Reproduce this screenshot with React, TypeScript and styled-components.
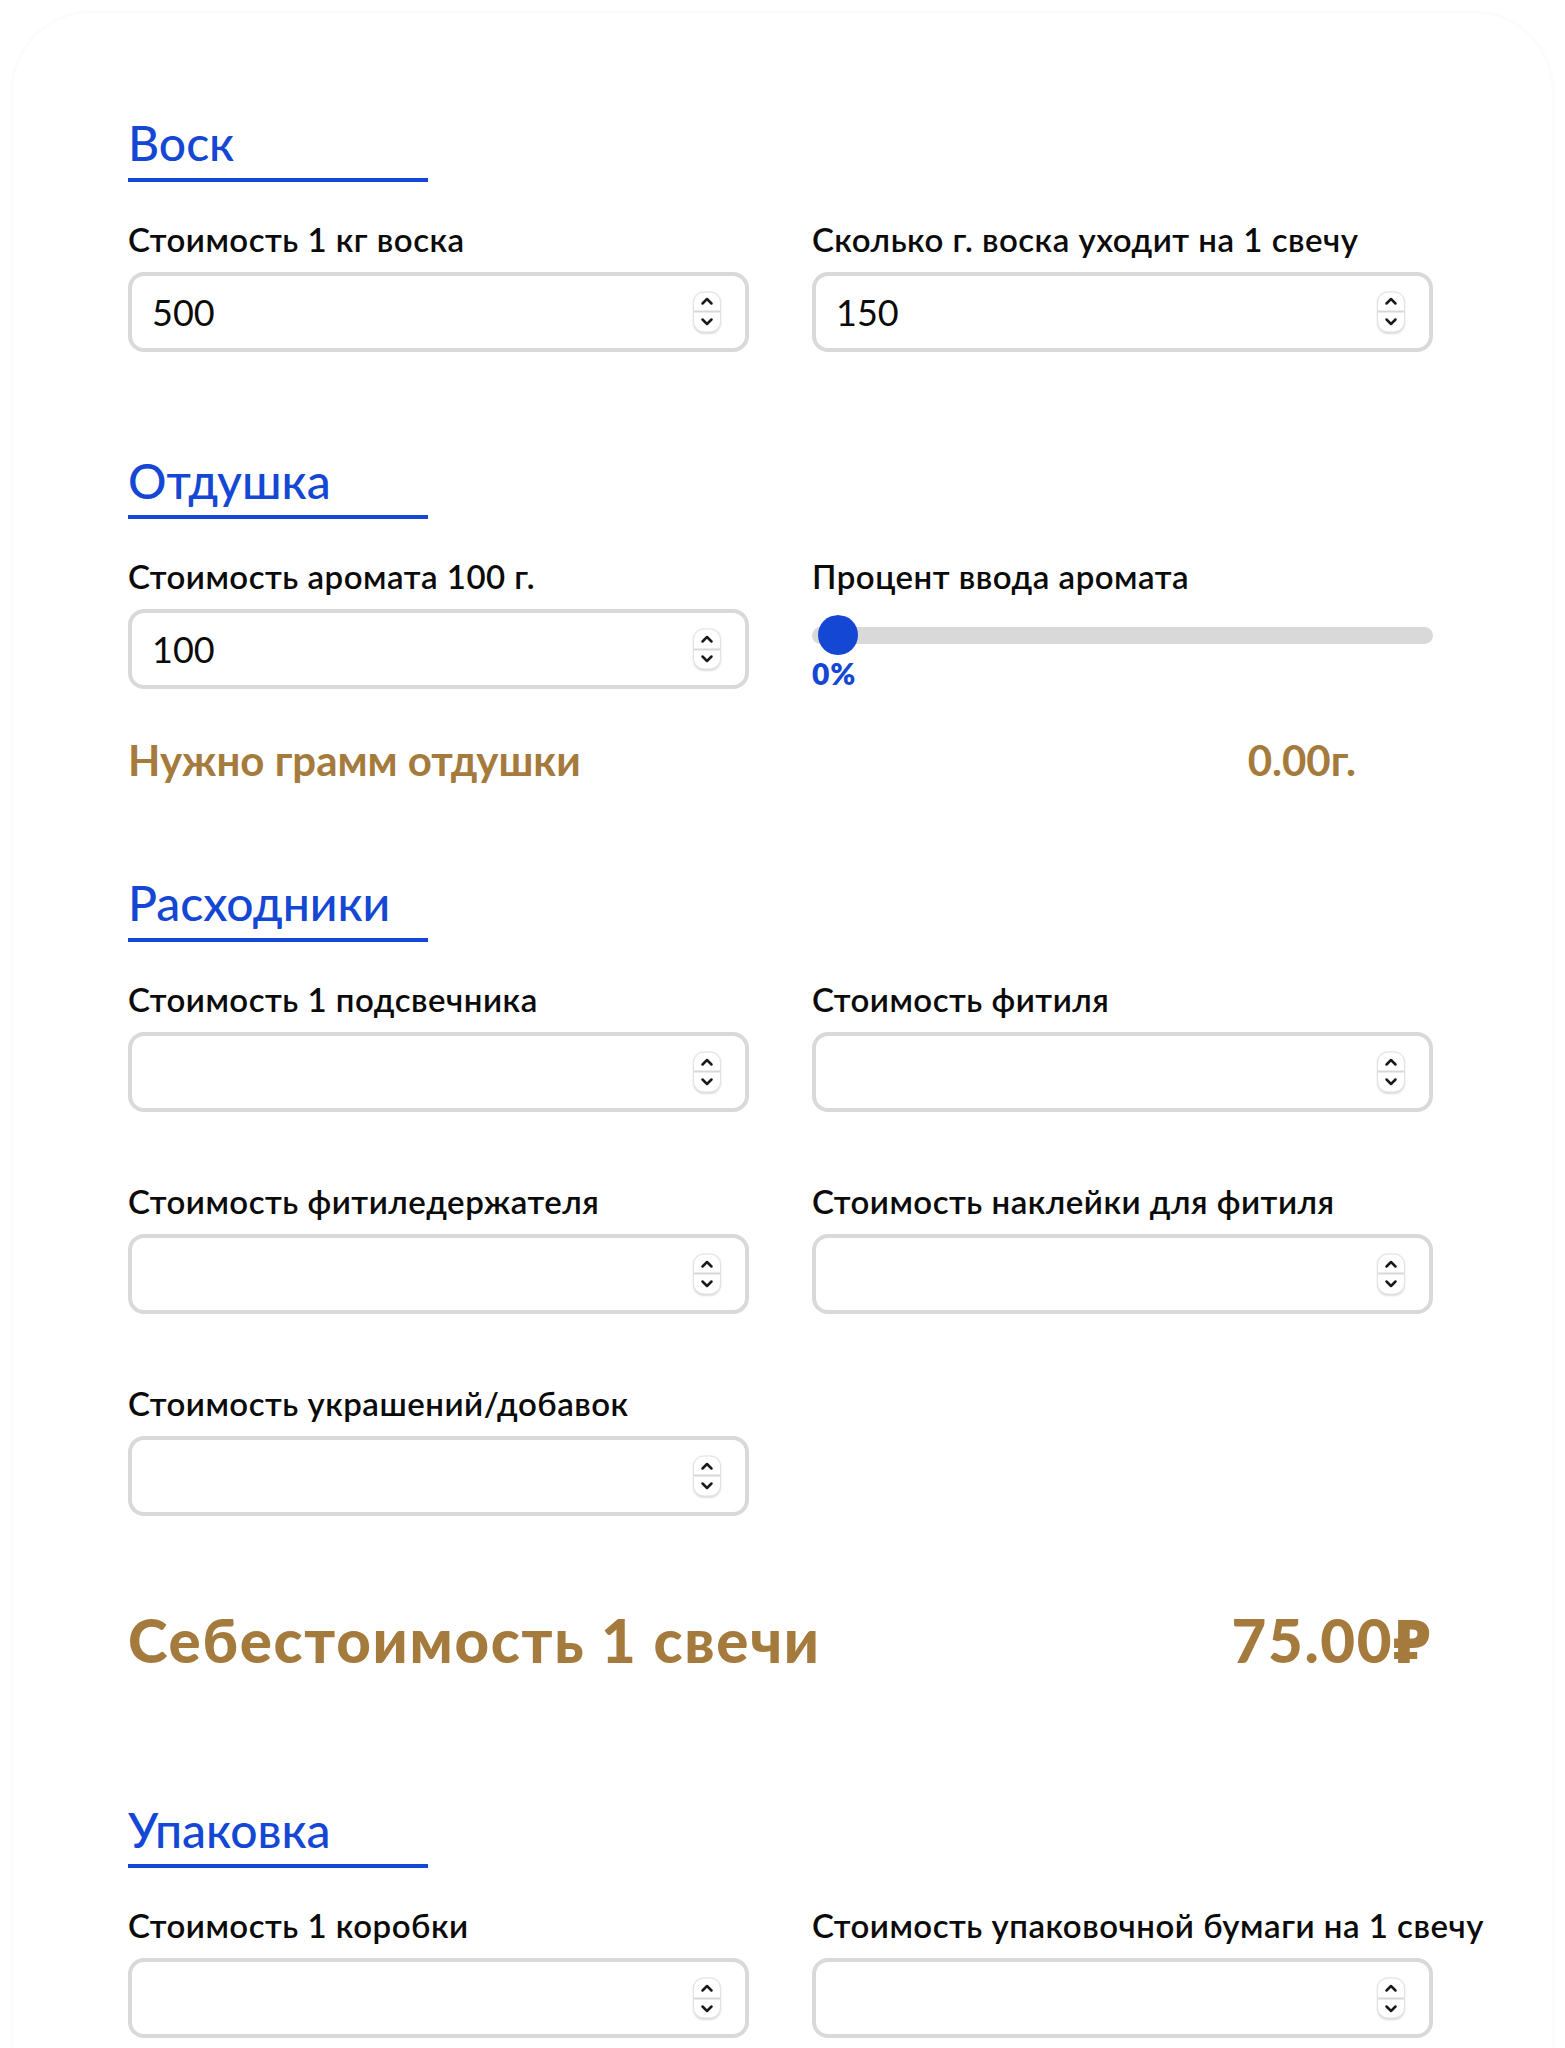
import React, { useState } from 'react'
import styled, { createGlobalStyle } from 'styled-components'

const colors = {
  blue: '#1447d4',
  gold: '#a57a3d',
  text: '#0b0b0b',
  border: '#d9d9d9',
  track: '#d9d9d9',
}

const GlobalStyle = createGlobalStyle`
  html, body {
    margin: 0;
    padding: 0;
    background: #ffffff;
  }
  body {
    font-family: Lato, "Noto Sans", sans-serif;
    color: ${colors.text};
  }
  * {
    box-sizing: border-box;
  }
`

const Page = styled.div`
  padding: 13px 13px 0;
`

const Card = styled.div`
  border-radius: 78px 78px 0 0;
  box-shadow: 0 0 5px rgba(0, 0, 0, 0.05);
  background: #fff;
  padding: 101px 119px 120px 115px;
`

const Section = styled.section<{ $gap?: number }>`
  margin-top: ${({ $gap = 0 }) => $gap}px;
`

const Heading = styled.h2`
  margin: 0;
  width: 300px;
  padding-bottom: 6px;
  border-bottom: 4px solid ${colors.blue};
  font-size: 48px;
  font-weight: 500;
  line-height: 1.2;
  color: ${colors.blue};
`

const Grid = styled.div`
  display: grid;
  grid-template-columns: minmax(0, 1fr) minmax(0, 1fr);
  column-gap: 63px;
  row-gap: 70px;
  margin-top: 38px;
`

const Field = styled.label`
  display: flex;
  flex-direction: column;
  gap: 14px;
`

const Label = styled.span`
  font-size: 33px;
  font-weight: 600;
  letter-spacing: 0.5px;
  line-height: 38px;
  white-space: nowrap;
`

const InputWrap = styled.div`
  position: relative;
  height: 80px;
`

const NumberInput = styled.input`
  width: 100%;
  height: 80px;
  border: 4px solid ${colors.border};
  border-radius: 16px;
  padding: 0 70px 0 20px;
  font-family: Lato, "Noto Sans", sans-serif;
  font-size: 36px;
  font-weight: 400;
  color: ${colors.text};
  background: #fff;
  outline: none;
  -moz-appearance: textfield;

  &::-webkit-inner-spin-button,
  &::-webkit-outer-spin-button {
    -webkit-appearance: none;
    margin: 0;
  }
`

const Spinner = styled.div`
  position: absolute;
  right: 28px;
  top: 50%;
  transform: translateY(-50%);
  width: 28px;
  height: 41px;
  border: 1px solid #e2e2e2;
  border-radius: 11px;
  background: #fff;
  box-shadow: 0 1px 2px rgba(0, 0, 0, 0.14);
  display: flex;
  flex-direction: column;
  overflow: hidden;
`

const SpinHalf = styled.button<{ $top?: boolean }>`
  flex: 1;
  display: flex;
  align-items: center;
  justify-content: center;
  border: none;
  padding: 0;
  background: transparent;
  cursor: pointer;
  border-bottom: ${({ $top }) => ($top ? '2px solid #d8d8d8' : 'none')};
`

const SliderBox = styled.div`
  margin-top: 6px;
`

const Range = styled.input`
  -webkit-appearance: none;
  appearance: none;
  display: block;
  width: 100%;
  height: 40px;
  margin: 0;
  background: transparent;

  &::-webkit-slider-runnable-track {
    height: 17px;
    border-radius: 9px;
    background: ${colors.track};
  }
  &::-webkit-slider-thumb {
    -webkit-appearance: none;
    width: 52px;
    height: 40px;
    margin-top: -11.5px;
    border-radius: 50%;
    border: none;
    border-left: 6px solid transparent;
    border-right: 6px solid transparent;
    background: ${colors.blue};
    background-clip: padding-box;
  }
  &::-moz-range-track {
    height: 17px;
    border-radius: 9px;
    background: ${colors.track};
  }
  &::-moz-range-thumb {
    width: 40px;
    height: 40px;
    border-radius: 50%;
    background: ${colors.blue};
    border: none;
  }
`

const Percent = styled.div`
  margin-top: 3px;
  font-size: 30px;
  font-weight: 800;
  letter-spacing: 0.8px;
  line-height: 31px;
  color: ${colors.blue};
`

const ResultRow = styled.div<{ $big?: boolean; $gap: number; $inset?: number }>`
  display: flex;
  justify-content: space-between;
  align-items: baseline;
  margin-top: ${({ $gap }) => $gap}px;
  padding-right: ${({ $inset = 0 }) => $inset}px;
  color: ${colors.gold};
  font-size: ${({ $big }) => ($big ? 60 : 42)}px;
  font-weight: ${({ $big }) => ($big ? 900 : 700)};
  letter-spacing: ${({ $big }) => ($big ? 1.7 : 0)}px;
  line-height: ${({ $big }) => ($big ? 70 : 50)}px;
`

const Chevron: React.FC<{ up?: boolean }> = ({ up }) => (
  <svg width="14" height="9" viewBox="0 0 14 9" fill="none">
    <path
      d={up ? 'M2.5 7 L7 2.5 L11.5 7' : 'M2.5 2 L7 6.5 L11.5 2'}
      stroke="#1a1a1a"
      strokeWidth="2.5"
      strokeLinecap="round"
      strokeLinejoin="round"
    />
  </svg>
)

interface NumberFieldProps {
  label: string
  value: string
  onChange: (v: string) => void
}

const NumberField: React.FC<NumberFieldProps> = ({ label, value, onChange }) => {
  const step = (d: number) => onChange(String((parseFloat(value) || 0) + d))
  return (
    <Field>
      <Label>{label}</Label>
      <InputWrap>
        <NumberInput
          type="number"
          value={value}
          onChange={(e) => onChange(e.target.value)}
        />
        <Spinner>
          <SpinHalf $top type="button" onClick={() => step(1)}>
            <Chevron up />
          </SpinHalf>
          <SpinHalf type="button" onClick={() => step(-1)}>
            <Chevron />
          </SpinHalf>
        </Spinner>
      </InputWrap>
    </Field>
  )
}

const num = (v: string) => parseFloat(v) || 0

const App: React.FC = () => {
  const [waxPrice, setWaxPrice] = useState('500')
  const [waxGrams, setWaxGrams] = useState('150')
  const [aromaPrice, setAromaPrice] = useState('100')
  const [aromaPercent, setAromaPercent] = useState(0)
  const [holder, setHolder] = useState('')
  const [wick, setWick] = useState('')
  const [wickHolder, setWickHolder] = useState('')
  const [sticker, setSticker] = useState('')
  const [decor, setDecor] = useState('')
  const [box, setBox] = useState('')
  const [paper, setPaper] = useState('')

  const aromaGrams = (num(waxGrams) * aromaPercent) / 100
  const cost =
    (num(waxPrice) * num(waxGrams)) / 1000 +
    (num(aromaPrice) * aromaGrams) / 100 +
    num(holder) +
    num(wick) +
    num(wickHolder) +
    num(sticker) +
    num(decor)

  return (
    <Page>
      <GlobalStyle />
      <Card>
        <Section>
          <Heading>Воск</Heading>
          <Grid>
            <NumberField label="Стоимость 1 кг воска" value={waxPrice} onChange={setWaxPrice} />
            <NumberField label="Сколько г. воска уходит на 1 свечу" value={waxGrams} onChange={setWaxGrams} />
          </Grid>
        </Section>

        <Section $gap={100}>
          <Heading>Отдушка</Heading>
          <Grid>
            <NumberField label="Стоимость аромата 100 г." value={aromaPrice} onChange={setAromaPrice} />
            <Field>
              <Label>Процент ввода аромата</Label>
              <SliderBox>
                <Range
                  type="range"
                  min={0}
                  max={15}
                  step={0.5}
                  value={aromaPercent}
                  onChange={(e) => setAromaPercent(parseFloat(e.target.value))}
                />
                <Percent>{aromaPercent}%</Percent>
              </SliderBox>
            </Field>
          </Grid>
          <ResultRow $gap={46} $inset={77}>
            <span>Нужно грамм отдушки</span>
            <span>{aromaGrams.toFixed(2)}г.</span>
          </ResultRow>
        </Section>

        <Section $gap={89}>
          <Heading>Расходники</Heading>
          <Grid>
            <NumberField label="Стоимость 1 подсвечника" value={holder} onChange={setHolder} />
            <NumberField label="Стоимость фитиля" value={wick} onChange={setWick} />
            <NumberField label="Стоимость фитиледержателя" value={wickHolder} onChange={setWickHolder} />
            <NumberField label="Стоимость наклейки для фитиля" value={sticker} onChange={setSticker} />
            <NumberField label="Стоимость украшений/добавок" value={decor} onChange={setDecor} />
          </Grid>
          <ResultRow $big $gap={89}>
            <span>Себестоимость 1 свечи</span>
            <span>{cost.toFixed(2)}₽</span>
          </ResultRow>
        </Section>

        <Section $gap={126}>
          <Heading>Упаковка</Heading>
          <Grid>
            <NumberField label="Стоимость 1 коробки" value={box} onChange={setBox} />
            <NumberField label="Стоимость упаковочной бумаги на 1 свечу" value={paper} onChange={setPaper} />
          </Grid>
        </Section>
      </Card>
    </Page>
  )
}

export default App
